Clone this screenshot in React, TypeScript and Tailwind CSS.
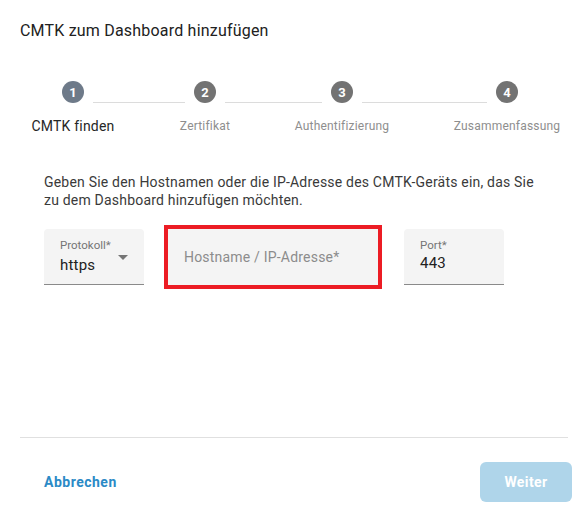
const steps = [
  { n: 1, label: "CMTK finden", active: true },
  { n: 2, label: "Zertifikat", active: false },
  { n: 3, label: "Authentifizierung", active: false },
  { n: 4, label: "Zusammenfassung", active: false },
];

const StepCircle = ({ n, active }: { n: number; active: boolean }) => (
  <div
    className={
      "w-[22px] h-[22px] rounded-full flex items-center justify-center text-white text-[13px] font-bold leading-none shrink-0 " +
      (active ? "bg-[#6e7a89]" : "bg-[#737373]")
    }
  >
    {n}
  </div>
);

const Line = ({ w }: { w: string }) => <div className={"h-px bg-[#dcdcdc] mt-[21px] mx-[9px] " + w} />;

const App = () => {
  return (
    <div
      className="w-[588px] h-[523px] bg-white flex flex-col overflow-hidden tracking-[0.2px]"
      style={{ fontFamily: "Roboto, 'Liberation Sans', sans-serif" }}
    >
      {/* Title */}
      <h1 className="pt-[21px] px-5 text-[16px] leading-[20px] text-[#212121]">CMTK zum Dashboard hinzufügen</h1>

      {/* Stepper */}
      <div className="mt-[40px] flex items-start pl-[62px] h-[22px]">
        <StepCircle n={1} active />
        <Line w="w-[92px]" />
        <StepCircle n={2} active={false} />
        <Line w="w-[97px]" />
        <StepCircle n={3} active={false} />
        <Line w="w-[125px]" />
        <StepCircle n={4} active={false} />
      </div>
      <div className="mt-[13px] flex items-center pl-[13px] h-5">
        {steps.map((s, i) => (
          <div
            key={s.n}
            className={
              "w-[120px] text-center whitespace-nowrap " +
              (i === 1 ? "ml-[12px] " : i === 2 ? "ml-[17px] " : i === 3 ? "ml-[45px] " : "") +
              (s.active ? "text-[14px] text-[#262626]" : "text-[12px] text-[#8e8e8e]")
            }
          >
            {s.label}
          </div>
        ))}
      </div>

      {/* Content */}
      <div className="px-[44px]">
        <p className="mt-[37px] w-[500px] text-[14px] leading-[18px] text-[#3a3a3a]">
          Geben Sie den Hostnamen oder die IP-Adresse des CMTK-Geräts ein, das Sie zu dem Dashboard hinzufügen möchten.
        </p>

        <div className="mt-[20px] flex items-start">
          {/* Protokoll */}
          <div className="w-[100px] h-[56px] bg-[#f4f4f4] rounded-t-[4px] border-b border-[#8a8a8a] px-4 pt-[8px] relative">
            <div className="text-[11.5px] leading-[16px] text-[#757575] tracking-normal">Protokoll*</div>
            <div className="text-[15px] leading-[20px] text-[#212121] mt-[2px]">https</div>
            <div className="absolute right-[16px] top-[26px] w-0 h-0 border-l-[5px] border-r-[5px] border-t-[5px] border-l-transparent border-r-transparent border-t-[#757575]" />
          </div>

          {/* Hostname */}
          <div className="ml-[24px] w-[210px] h-[56px] bg-[#f4f4f4] outline-4 outline-[#ec1c24] px-4 flex items-center">
            <span className="text-[14px] text-[#8c8c8c]">Hostname / IP-Adresse*</span>
          </div>

          {/* Port */}
          <div className="ml-[26px] w-[100px] h-[56px] bg-[#f4f4f4] rounded-t-[4px] border-b border-[#8a8a8a] px-4 pt-[8px]">
            <div className="text-[11.5px] leading-[16px] text-[#757575] tracking-normal">Port*</div>
            <div className="text-[15px] leading-[20px] text-[#212121]">443</div>
          </div>
        </div>
      </div>

      <div className="flex-1" />

      {/* Footer */}
      <div className="mx-5 h-px bg-[#e0e0e0]" />
      <div className="flex items-center justify-between pl-[24px] pr-4 pt-[24px] pb-[21px]">
        <button className="px-5 h-10 text-[14px] font-bold text-[#2b8ac6] tracking-[0.5px]">Abbrechen</button>
        <button className="w-[92px] h-10 rounded-[6px] bg-[#afd5ea] text-white text-[14px] font-bold tracking-[0.4px]">Weiter</button>
      </div>
    </div>
  );
};

export default App;
